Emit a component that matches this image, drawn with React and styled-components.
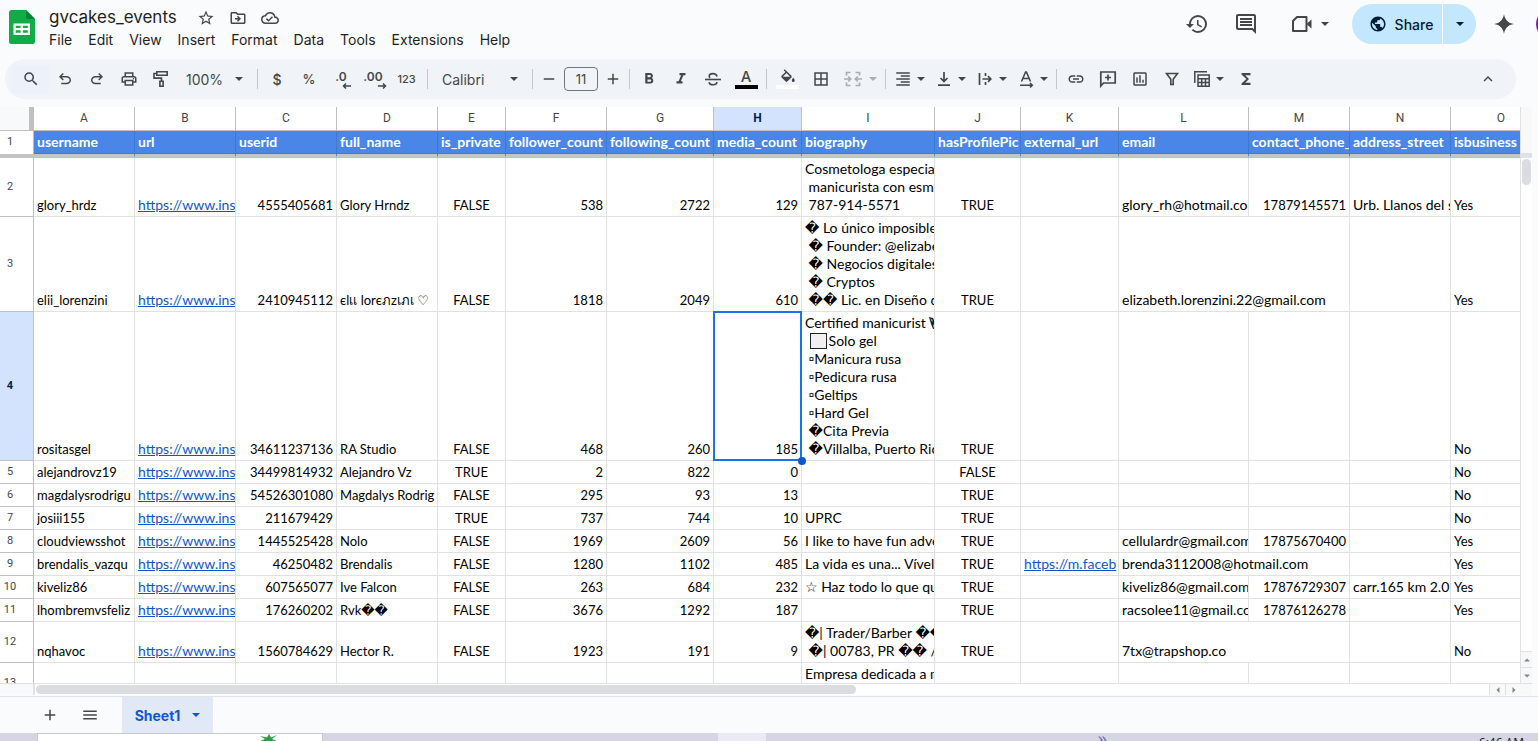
import React from "react";
import styled, { createGlobalStyle, css } from "styled-components";
import {
  MdStarBorder,
  MdOutlineDriveFileMove,
  MdOutlineCloudDone,
  MdHistory,
  MdOutlineComment,
  MdPublic,
  MdSearch,
  MdOutlinePrint,
  MdFormatBold,
  MdFormatItalic,
  MdBorderAll,
  MdFormatAlignRight,
  MdLink,
  MdOutlineInsertChart,
  MdFunctions,
  MdKeyboardArrowUp,
  MdMenu,
  MdAdd,
  MdRemove,
} from "react-icons/md";

const ui = `Inter, Roboto, "Liberation Sans", sans-serif`;
const cellFont = `Lato, "DejaVu Sans", "Noto Sans", sans-serif`;
const gray = "#444746";

const GlobalStyle = createGlobalStyle`
  *, *::before, *::after { box-sizing: border-box; }
  body { margin: 0; background: #f9fbfd; font-family: ${ui}; color: #1f1f1f; }
  button, input, select { font: inherit; color: inherit; }
`;

const Page = styled.div`
  display: flex;
  flex-direction: column;
  height: 100vh;
  overflow: hidden;
`;

/* ---------- title bar ---------- */

const Header = styled.header`
  display: flex;
  flex: none;
  height: 59px;
  padding-left: 9px;
  overflow: hidden;
`;

const Logo = styled.svg`
  flex: none;
  width: 26px;
  height: 34px;
  margin-top: 10px;
`;

const TitleBlock = styled.div`
  display: flex;
  flex-direction: column;
  margin-left: 6px;
  padding-top: 6px;
`;

const TitleLine = styled.div`
  display: flex;
  align-items: center;
  height: 24px;
  padding-left: 8px;
`;

const TitleInput = styled.input`
  width: 141px;
  padding: 0 0 2px;
  border: 0;
  background: none;
  font-size: 17px;
  line-height: 22px;
  outline: none;
`;

const PlainButton = styled.button`
  display: inline-flex;
  align-items: center;
  justify-content: center;
  flex: none;
  padding: 0;
  border: 0;
  background: none;
  color: ${gray};
`;

const TitleButton = styled(PlainButton)`
  width: 32px;
  height: 24px;
  font-size: 18px;
`;

const MenuBar = styled.nav`
  display: flex;
  height: 20px;
`;

const MenuButton = styled(PlainButton)`
  padding: 0 8px;
  font-size: 14px;
  line-height: 20px;
  color: #1f1f1f;
`;

const HeaderActions = styled.div`
  display: flex;
  align-items: center;
  height: 48px;
  margin-left: auto;
`;

const HeaderButton = styled(PlainButton)`
  width: ${(p) => p.$w || 49}px;
  height: 40px;
  padding-left: ${(p) => p.$pad || 0}px;
  gap: 8px;
  font-size: 24px;
`;

const SharePill = styled.div`
  display: flex;
  height: 40px;
  margin-left: 10px;
  border-radius: 20px;
  overflow: hidden;
  background: #c2e7ff;
`;

const ShareButton = styled(PlainButton)`
  width: 90px;
  padding-left: 8px;
  gap: 8px;
  font-size: 14px;
  font-weight: 500;
  color: #001d35;
  svg { font-size: 18px; }
`;

const ShareMenu = styled(PlainButton)`
  width: 34px;
  border-left: 1px solid #fff;
  color: #001d35;
`;

const Avatar = styled.span`
  flex: none;
  width: 32px;
  height: 32px;
  margin: 0 -30px 0 4px;
  border-radius: 50%;
  background: #7b1fa2;
`;

/* ---------- toolbar ---------- */

const Toolbar = styled.div`
  display: flex;
  align-items: center;
  flex: none;
  height: 40px;
  margin: 0 22px 8px 5px;
  padding: 0 12px 0 7px;
  border-radius: 20px;
  background: #f0f4f9;
`;

const Tool = styled(PlainButton)`
  width: ${(p) => p.$w || 32}px;
  height: 28px;
  font-size: 18px;
  opacity: ${(p) => (p.disabled ? 0.4 : 1)};
  ${(p) => p.$lit && css`background: #edf1fb;`}
`;

const TextTool = styled(Tool)`
  font-size: ${(p) => p.$size || 14}px;
  font-weight: 500;
`;

const SplitTool = styled(Tool)`
  width: ${(p) => p.$w || 41}px;
  padding-right: 5px;
  > :first-child { margin: 0 auto; }
`;

const Divider = styled.span`
  flex: none;
  width: 1px;
  height: 20px;
  margin: 0 3px;
  background: #c7c7c7;
`;

const SelectBox = styled.label`
  position: relative;
  flex: none;
  width: ${(p) => p.$w}px;
  color: ${gray};
  svg {
    position: absolute;
    top: 12px;
    right: 11px;
    pointer-events: none;
  }
`;

const Select = styled.select`
  width: 100%;
  height: 28px;
  padding: 0 0 0 ${(p) => p.$pad}px;
  border: 0;
  background: none;
  appearance: none;
  font-size: 14px;
  outline: none;
`;

const SizeInput = styled.input`
  width: 34px;
  height: 24px;
  margin: 0 2px;
  padding: 0;
  border: 1px solid #747775;
  border-radius: 4px;
  background: none;
  font-size: 13px;
  text-align: center;
  color: ${gray};
`;

const Stack = styled.span`
  display: flex;
  flex-direction: column;
  align-items: center;
  font-size: 15px;
  line-height: 16px;
  font-weight: 500;
  &::after {
    content: "";
    width: 23px;
    height: 4px;
    background: ${(p) => p.$ink};
  }
`;

const Spacer = styled.span`
  flex: 1;
`;

/* ---------- sheet ---------- */

const SheetArea = styled.main`
  display: flex;
  flex: 1;
  min-height: 0;
  margin-right: 6px;
  background: #fff;
`;

const SheetMain = styled.div`
  display: flex;
  flex-direction: column;
  flex: 1;
  min-width: 0;
`;

const GridView = styled.div`
  flex: 1;
  min-height: 0;
  overflow: hidden;
  border-right: 1px solid #e1e1e1;
  border-bottom: 1px solid #e1e1e1;
`;

const Grid = styled.table`
  width: ${(p) => p.$w}px;
  table-layout: fixed;
  border-collapse: separate;
  border-spacing: 0;
  font-family: ${cellFont};
  font-size: 13px;
  color: #000;
`;

const Col = styled.col`
  width: ${(p) => p.$w}px;
`;

const Corner = styled.td`
  height: 24px;
  padding: 0;
  border-right: 5px solid #c0c0c0;
  border-bottom: 1px solid #c0c0c0;
  background: #f8f9fa;
`;

const ColumnHead = styled.th`
  height: 24px;
  padding: 0 0 2px;
  border-right: 1px solid #c0c0c0;
  border-bottom: 1px solid #c0c0c0;
  font: ${(p) => (p.$on ? 700 : 400)} 12px Roboto, sans-serif;
  color: ${(p) => (p.$on ? "#041e49" : gray)};
  background: ${(p) => (p.$on ? "#d3e3fd" : "#fff")};
`;

const RowHead = styled.th`
  padding: 0 13px 2px 0;
  border-right: 1px solid #c0c0c0;
  border-bottom: 1px solid #c0c0c0;
  font: ${(p) => (p.$on ? 700 : 400)} 11px Roboto, sans-serif;
  color: ${(p) => (p.$on ? "#041e49" : gray)};
  background: ${(p) => (p.$on ? "#d3e3fd" : "#fff")};
  ${(p) => p.$frozen && css`border-bottom: 4px solid #c4c4c4;`}
`;

const FieldHead = styled.td`
  height: 27px;
  padding: 0 3px 1px;
  border-right: 1px solid #3f77cf;
  border-bottom: 4px solid #c4c4c4;
  box-shadow: inset 0 -1px #3f77cf;
  background: #4a86e8;
  font-size: 14px;
  font-weight: 700;
  color: #fff;
`;

const Row = styled.tr`
  height: ${(p) => p.$h}px;
`;

const Cell = styled.td`
  position: relative;
  padding: 2px 3px;
  border-right: 1px solid #e1e1e1;
  border-bottom: 1px solid #e1e1e1;
  font-size: ${(p) => (p.$wide ? 14 : 13)}px;
  vertical-align: ${(p) => (p.$top ? "top" : "bottom")};
  text-align: ${(p) => p.$align || "left"};
`;

const Line = styled.div`
  height: 18px;
  margin-right: ${(p) => (p.$flush ? -3 : 0)}px;
  overflow: hidden;
  line-height: 18px;
  white-space: pre;
`;

const CellLink = styled.a`
  color: #1155cc;
`;

const Selection = styled.span`
  position: absolute;
  inset: -1px;
  z-index: 1;
  border: 2px solid #1a73e8;
  pointer-events: none;
  &::after {
    content: "";
    position: absolute;
    right: -6px;
    bottom: -6px;
    width: 8px;
    height: 8px;
    border-radius: 50%;
    background: #0b57d0;
  }
`;

const BoxGlyph = styled.span`
  display: inline-block;
  width: 17px;
  height: 16px;
  margin: 1px 2px 0 1px;
  border: 1px solid #222;
  background: #f0f0f0;
  vertical-align: top;
`;

const EmojiDrawing = styled.svg`
  width: 14px;
  height: 14px;
  vertical-align: -2px;
`;

/* ---------- scroll bars ---------- */

const HScroll = styled.div`
  display: flex;
  height: 11px;
`;

const HCorner = styled.span`
  width: 35px;
  border-right: 2px solid #e1e1e1;
  background: #f8f9fa;
`;

const HTrack = styled.div`
  flex: 1;
  padding: 1px;
`;

const HThumb = styled.div`
  width: 56.5%;
  height: 9px;
  border-radius: 5px;
  background: #dadce0;
`;

const ScrollButton = styled(PlainButton)`
  width: ${(p) => (p.$v ? 11 : 16)}px;
  height: ${(p) => (p.$v ? 16 : 11)}px;
  background: #f8f8f8;
  ${(p) => (p.$v ? css`border-top: 1px solid #e1e1e1;` : css`border-left: 1px solid #e1e1e1;`)}
  color: #80868b;
`;

const VScroll = styled.div`
  display: flex;
  flex-direction: column;
  flex: none;
  width: 11px;
`;

const VHead = styled.span`
  height: 51px;
  border-bottom: 5px solid #dde1ea;
  background: #f8f8f8;
`;

const VTrack = styled.div`
  flex: 1;
  padding: 1px;
`;

const VThumb = styled.div`
  height: 26px;
  border-radius: 5px;
  background: #dadce0;
`;

const VFoot = styled.span`
  height: 12px;
  border-top: 1px solid #e1e1e1;
  background: #f8f8f8;
`;

/* ---------- tabs and task bar ---------- */

const TabBar = styled.footer`
  display: flex;
  align-items: center;
  flex: none;
  height: 37px;
  margin-top: 1px;
  padding-left: 30px;
  border-top: 1px solid #e1e3e6;
`;

const TabIcon = styled(PlainButton)`
  width: 40px;
  height: 36px;
  font-size: 18px;
`;

const SheetTab = styled(PlainButton)`
  width: 91px;
  height: 36px;
  margin-left: 12px;
  gap: 12px;
  background: #e1e9f7;
  font-size: 14px;
  font-weight: 700;
  color: #0b57d0;
`;

const TaskBar = styled.div`
  display: flex;
  flex: none;
  height: 8px;
  overflow: hidden;
  padding: 0 14px 0 37px;
  background: #d5d6e1;
`;

const TaskWindow = styled.div`
  width: 286px;
  padding-left: 220px;
  border: 1px solid #c9c9c9;
  border-bottom: 0;
  background: #fff;
  svg { display: block; width: 22px; height: 8px; }
`;

const TaskApp = styled.span`
  width: 48px;
  margin-left: 395px;
  background: #eaebf2;
`;

const TaskMore = styled.span`
  margin-left: auto;
  padding: 2px 372px 0 0;
  font: 16px/8px "Liberation Sans", sans-serif;
  color: #6b6bb0;
`;

const Clock = styled.span`
  padding-top: 3px;
  font: 12px/14px "Open Sans", sans-serif;
  color: #111;
`;

/* ---------- icons ---------- */

const Icon = ({ d, size = 18, box = 24, children, ...rest }) => (
  <svg width={size} height={size} viewBox={`0 0 ${box} ${box}`} fill="currentColor" aria-hidden="true" {...rest}>
    {d && <path d={d} />}
    {children}
  </svg>
);

const Caret = () => (
  <svg width="8" height="4" viewBox="0 0 8 4" fill="currentColor" aria-hidden="true">
    <path d="M0 0h8L4 4z" />
  </svg>
);

const undoPath =
  "M7 19v-2h7.1q1.575 0 2.738-1T18 13.5 16.838 11 14.1 10H7.8l2.6 2.6L9 14 4 9l5-5 1.4 1.4L7.8 8h6.3q2.425 0 4.163 1.575T20 13.5t-1.738 3.925T14.1 19H7Z";

const UndoIcon = () => <Icon d={undoPath} />;
const RedoIcon = () => (
  <Icon>
    <path d={undoPath} transform="matrix(-1 0 0 1 24 0)" />
  </Icon>
);

const Stroke = ({ children, w = 18, h = 18, sw = 1.6 }) => (
  <svg width={w} height={h} viewBox={`0 0 ${w} ${h}`} fill="none" stroke="currentColor" strokeWidth={sw} aria-hidden="true">
    {children}
  </svg>
);

const RollerIcon = () => (
  <Stroke>
    <path d="M4.800 1.800h10.400v3.400H4.800zM4.800 3.500H2v4.600h7.500v3M7.900 11.300h3.200v5H7.900z" />
  </Stroke>
);

const DecimalArrow = ({ right, children }) => (
  <DecimalBox>
    {children}
    <Stroke w={9} h={6} sw={1.5}>
      <path d={right ? "M0 3h7M5 .5 7.500 3 5 5.500" : "M9 3H2M4 .5 1.500 3 4 5.500"} />
    </Stroke>
  </DecimalBox>
);

const DecimalBox = styled.span`
  display: flex;
  flex-direction: column;
  align-items: flex-end;
  padding-top: 2px;
  font-size: 12px;
  font-weight: 600;
  line-height: 12px;
  svg { margin-right: -4px; }
`;

const BucketIcon = () => (
  <svg width="18" height="16" viewBox="0 0 24 21" fill="currentColor" aria-hidden="true">
    <path d="M16.560 8.940 7.620 0 6.210 1.410l2.380 2.380-5.150 5.150c-.59.59-.59 1.540 0 2.120l5.500 5.500c.29.29.68.44 1.060.44s.77-.15 1.060-.44l5.500-5.500c.59-.58.59-1.530 0-2.120zM5.210 10 10 5.210 14.790 10zM19 11.500s-2 2.170-2 3.500c0 1.100.9 2 2 2s2-.9 2-2c0-1.330-2-3.500-2-3.500z" />
  </svg>
);

const StrikeIcon = () => (
  <Stroke>
    <path d="M1 9.500h16" />
    <path d="M13 6.500C12.600 4.500 11 3.600 9 3.600S5.200 4.600 5.200 6.200c0 .7.3 1.300.9 1.700M5 12.200c.5 1.800 2 2.600 4 2.600s3.900-.9 3.900-2.700" />
  </Stroke>
);

const MergeIcon = () => (
  <Stroke sw={1.7}>
    <path d="M6.500 2.500h-4v3M11.500 2.500h4v3M6.500 15.500h-4v-3M11.500 15.500h4v-3M0 9h6M18 9h-6M4.200 6.500 6.700 9l-2.500 2.500M13.800 6.500 11.300 9l2.500 2.500" />
  </Stroke>
);

const AlignBottomIcon = () => (
  <Stroke sw={1.7}>
    <path d="M9 2v9.500M5.500 8 9 11.500 12.500 8M3 15.200h12" />
  </Stroke>
);

const WrapIcon = () => (
  <Stroke sw={1.7}>
    <path d="M3.500 3v12M9.500 3v3M9.500 12v3M6.500 9h8M12 6.200 14.800 9 12 11.800" />
  </Stroke>
);

const RotateIcon = () => (
  <Stroke sw={1.6}>
    <path d="M4.500 11.500 8.600 2h.8l4.100 9.500M6 8.500h6M3 15.200h12M13 13l2.300 2.200L13 17.400" />
  </Stroke>
);

const AddCommentIcon = () => (
  <Stroke sw={1.7}>
    <path d="M1.800 16V2h14.400v11H4.500zM9 4.500v6M6 7.500h6" />
  </Stroke>
);

const FilterIcon = () => (
  <Stroke sw={1.6}>
    <path d="M3.500 3.500h11L10.200 9.200v5.300H7.800V9.200z" />
  </Stroke>
);

const TableViewIcon = () => (
  <Stroke sw={1.5}>
    <path d="M1.800 13V1.800H14M5 5h11.200v11.200H5zM5 8.700h11.200M5 12.400h11.200M8.700 8.700v7.500M12.500 8.700v7.500" />
  </Stroke>
);

const CameraIcon = () => (
  <svg width="22" height="18" viewBox="0 0 22 18" aria-hidden="true">
    <path d="M6 2h9.500v14H2V6z" fill="none" stroke={gray} strokeWidth="2" strokeLinejoin="round" />
    <path d="M16 8.500 20.500 4.500v9L16 9.500z" fill={gray} />
  </svg>
);

const SparkIcon = () => (
  <svg width="20" height="20" viewBox="0 0 20 20" fill={gray} aria-hidden="true">
    <path d="M10 0c.8 5.600 4 9.200 10 10-6 .8-9.200 4.400-10 10-.8-5.600-4-9.200-10-10C6 9.200 9.200 5.600 10 0z" />
  </svg>
);

const SheetsLogo = () => (
  <Logo viewBox="0 0 26 34" role="img" aria-label="Sheets">
    <path d="M2.500 0H17l9 9v22.500a2.500 2.500 0 0 1-2.500 2.500h-21A2.500 2.500 0 0 1 0 31.500v-29A2.500 2.500 0 0 1 2.500 0z" fill="#0fac48" />
    <path d="M17 0l9 9h-6.500A2.500 2.500 0 0 1 17 6.500z" fill="#078335" />
    <path d="M4.500 13.500h16.500V25H4.500zM6.700 15.700v2.400h4.900v-2.400zM13.900 15.700v2.400h4.900v-2.400zM6.700 20.300v2.500h4.900v-2.500zM13.900 20.300v2.500h4.900v-2.500z" fill="#fff" fillRule="evenodd" />
  </Logo>
);

const Nail = () => (
  <EmojiDrawing viewBox="0 0 14 14" aria-hidden="true">
    <path d="M0 1l4 1 2 4 5 1v6H4L2 8z" fill="#222" />
    <path d="M1.500 2.500l2 1 .5 2-2-.5z" fill="#2bb3c0" />
    <path d="M4 9l4-1v4l-3 1z" fill="#e8a0b8" />
  </EmojiDrawing>
);

/* ---------- data ---------- */

const columns = [
  ["A", 101, "username"],
  ["B", 101, "url"],
  ["C", 101, "userid", "right"],
  ["D", 101, "full_name"],
  ["E", 68, "is_private", "center"],
  ["F", 101, "follower_count", "right"],
  ["G", 107, "following_count", "right"],
  ["H", 88, "media_count", "right"],
  ["I", 133, "biography"],
  ["J", 86, "hasProfilePic", "center"],
  ["K", 98, "external_url"],
  ["L", 130, "email"],
  ["M", 101, "contact_phone_", "right"],
  ["N", 101, "address_street"],
  ["O", 101, "isbusiness"],
];
const wideText = ["B", "I", "K", "L", "N"];
const rowHeadWidth = 34;
const gridWidth = columns.reduce((sum, c) => sum + c[1], rowHeadWidth);

const profile = "https://www.ins";
const bio4 = [
  <>Certified manicurist <Nail /></>,
  <> <BoxGlyph />Solo gel</>,
  " ▫Manicura rusa",
  " ▫Pedicura rusa",
  " ▫Geltips",
  " ▫Hard Gel",
  " \uFFFDCita Previa",
  " \uFFFDVillalba, Puerto Ric",
];

const rows = [
  { n: 2, h: 59, v: ["glory_hrdz", profile, "4555405681", "Glory Hrndz", "FALSE", "538", "2722", "129", ["Cosmetologa especial", " manicurista con esma", " 787-914-5571"], "TRUE", "", "glory_rh@hotmail.co", "17879145571", "Urb. Llanos del s", "Yes"] },
  { n: 3, h: 95, wide: true, v: ["elii_lorenzini", profile, "2410945112", "єlเเ lorєภzเภเ ♡", "FALSE", "1818", "2049", "610", ["\uFFFD Lo único imposible", " \uFFFD Founder: @elizabe", " \uFFFD Negocios digitales", " \uFFFD Cryptos", " \uFFFD\uFFFD Lic. en Diseño d"], "TRUE", "", "elizabeth.lorenzini.22@gmail.com", "", "", "Yes"] },
  { n: 4, h: 149, v: ["rositasgel", profile, "34611237136", "RA Studio", "FALSE", "468", "260", "185", bio4, "TRUE", "", "", "", "", "No"] },
  { n: 5, h: 23, v: ["alejandrovz19", profile, "34499814932", "Alejandro Vz", "TRUE", "2", "822", "0", "", "FALSE", "", "", "", "", "No"] },
  { n: 6, h: 23, v: ["magdalysrodrigu", profile, "54526301080", "Magdalys Rodrig", "FALSE", "295", "93", "13", "", "TRUE", "", "", "", "", "No"] },
  { n: 7, h: 23, v: ["josiii155", profile, "211679429", "", "TRUE", "737", "744", "10", "UPRC", "TRUE", "", "", "", "", "No"] },
  { n: 8, h: 23, v: ["cloudviewsshot", profile, "1445525428", "Nolo", "FALSE", "1969", "2609", "56", "I like to have fun adve", "TRUE", "", "cellulardr@gmail.com", "17875670400", "", "Yes"] },
  { n: 9, h: 23, wide: true, v: ["brendalis_vazqu", profile, "46250482", "Brendalis", "FALSE", "1280", "1102", "485", "La vida es una... Vívela", "TRUE", "https://m.faceb", "brenda3112008@hotmail.com", "", "", "Yes"] },
  { n: 10, h: 23, v: ["kiveliz86", profile, "607565077", "Ive Falcon", "FALSE", "263", "684", "232", "☆ Haz todo lo que qui", "TRUE", "", "kiveliz86@gmail.com", "17876729307", "carr.165 km 2.0 I", "Yes"] },
  { n: 11, h: 23, v: ["lhombremvsfeliz", profile, "176260202", "Rvk\uFFFD\uFFFD", "FALSE", "3676", "1292", "187", "", "TRUE", "", "racsolee11@gmail.co", "17876126278", "", "Yes"] },
  { n: 12, h: 41, wide: true, v: ["nqhavoc", profile, "1560784629", "Hector R.", "FALSE", "1923", "191", "9", ["\uFFFD| Trader/Barber \uFFFD\uFFFD", " \uFFFD| 00783, PR \uFFFD\uFFFD /"], "TRUE", "", "7tx@trapshop.co", "", "", "No"] },
  { n: 13, h: 41, top: true, v: ["", "", "", "", "", "", "", "", "Empresa dedicada a m", "", "", "", "", "", ""] },
];

const CellContent = ({ value, flush }) => {
  const lines = Array.isArray(value) ? value : [value];
  return lines.map((line, i) => (
    <Line key={i} $flush={flush}>
      {typeof line === "string" && line.startsWith("https://") ? <CellLink href={line}>{line}</CellLink> : line}
    </Line>
  ));
};

const DataRow = ({ row }) => (
  <Row $h={row.h}>
    <RowHead scope="row" $on={row.n === 4}>{row.n}</RowHead>
    {columns.map(([letter, , , align], i) => {
      if (row.wide && letter === "M") return null;
      return (
        <Cell
          key={letter}
          colSpan={row.wide && letter === "L" ? 2 : 1}
          $align={align}
          $top={row.top}
          $wide={wideText.includes(letter)}
        >
          {row.v[i] && <CellContent value={row.v[i]} flush={!align} />}
          {row.n === 4 && letter === "H" && <Selection />}
        </Cell>
      );
    })}
  </Row>
);

export default function App() {
  return (
    <Page>
      <GlobalStyle />
      <Header>
        <SheetsLogo />
        <TitleBlock>
          <TitleLine>
            <TitleInput aria-label="Rename" defaultValue="gvcakes_events" />
            <TitleButton aria-label="Star"><MdStarBorder /></TitleButton>
            <TitleButton aria-label="Move"><MdOutlineDriveFileMove /></TitleButton>
            <TitleButton aria-label="Document status"><MdOutlineCloudDone /></TitleButton>
          </TitleLine>
          <MenuBar>
            {["File", "Edit", "View", "Insert", "Format", "Data", "Tools", "Extensions", "Help"].map((m) => (
              <MenuButton key={m}>{m}</MenuButton>
            ))}
          </MenuBar>
        </TitleBlock>
        <HeaderActions>
          <HeaderButton aria-label="Version history"><MdHistory /></HeaderButton>
          <HeaderButton aria-label="Comments"><MdOutlineComment /></HeaderButton>
          <HeaderButton $w={72} $pad={8} aria-label="Meet"><CameraIcon /><Caret /></HeaderButton>
          <SharePill>
            <ShareButton><MdPublic />Share</ShareButton>
            <ShareMenu aria-label="Share options"><Caret /></ShareMenu>
          </SharePill>
          <HeaderButton $w={56} aria-label="Ask Gemini"><SparkIcon /></HeaderButton>
          <Avatar />
        </HeaderActions>
      </Header>

      <Toolbar role="toolbar">
        <Tool $w={37} $lit aria-label="Search the menus"><MdSearch /></Tool>
        <Tool aria-label="Undo"><UndoIcon /></Tool>
        <Tool aria-label="Redo"><RedoIcon /></Tool>
        <Tool aria-label="Print"><MdOutlinePrint /></Tool>
        <Tool aria-label="Paint format"><RollerIcon /></Tool>
        <SelectBox $w={77}>
          <Select $pad={9} aria-label="Zoom"><option>100%</option></Select>
          <Caret />
        </SelectBox>
        <Divider />
        <TextTool aria-label="Currency">$</TextTool>
        <TextTool aria-label="Percent" $size={13}>%</TextTool>
        <Tool aria-label="Decrease decimal places"><DecimalArrow>.0</DecimalArrow></Tool>
        <Tool aria-label="Increase decimal places"><DecimalArrow right>.00</DecimalArrow></Tool>
        <TextTool $w={35} $size={11} aria-label="More formats">123</TextTool>
        <Divider />
        <SelectBox $w={98}>
          <Select $pad={11} aria-label="Font"><option>Calibri</option></Select>
          <Caret />
        </SelectBox>
        <Divider />
        <Tool $w={26} aria-label="Decrease font size"><MdRemove /></Tool>
        <SizeInput aria-label="Font size" defaultValue="11" />
        <Tool $w={26} aria-label="Increase font size"><MdAdd /></Tool>
        <Divider />
        <Tool aria-label="Bold"><MdFormatBold /></Tool>
        <Tool aria-label="Italic"><MdFormatItalic /></Tool>
        <Tool aria-label="Strikethrough"><StrikeIcon /></Tool>
        <Tool $w={34} aria-label="Text color"><Stack $ink="#000">A</Stack></Tool>
        <Divider />
        <Tool $w={35} aria-label="Fill color"><Stack $ink="#fff"><BucketIcon /></Stack></Tool>
        <Tool aria-label="Borders"><MdBorderAll /></Tool>
        <SplitTool $w={45} disabled aria-label="Merge cells"><MergeIcon /><Caret /></SplitTool>
        <Divider />
        <SplitTool aria-label="Horizontal align"><MdFormatAlignRight /><Caret /></SplitTool>
        <SplitTool aria-label="Vertical align"><AlignBottomIcon /><Caret /></SplitTool>
        <SplitTool aria-label="Text wrapping"><WrapIcon /><Caret /></SplitTool>
        <SplitTool aria-label="Text rotation"><RotateIcon /><Caret /></SplitTool>
        <Divider />
        <Tool aria-label="Insert link"><MdLink /></Tool>
        <Tool aria-label="Insert comment"><AddCommentIcon /></Tool>
        <Tool aria-label="Insert chart"><MdOutlineInsertChart /></Tool>
        <Tool aria-label="Create a filter"><FilterIcon /></Tool>
        <SplitTool aria-label="Table views"><TableViewIcon /><Caret /></SplitTool>
        <Tool $w={33} aria-label="Functions"><MdFunctions /></Tool>
        <Spacer />
        <Tool aria-label="Hide the menus"><MdKeyboardArrowUp /></Tool>
      </Toolbar>

      <SheetArea>
        <SheetMain>
          <GridView>
            <Grid $w={gridWidth}>
              <colgroup>
                <Col $w={rowHeadWidth} />
                {columns.map(([letter, w]) => <Col key={letter} $w={w} />)}
              </colgroup>
              <thead>
                <tr>
                  <Corner />
                  {columns.map(([letter]) => (
                    <ColumnHead key={letter} scope="col" $on={letter === "H"}>{letter}</ColumnHead>
                  ))}
                </tr>
                <tr>
                  <RowHead scope="row" $frozen>1</RowHead>
                  {columns.map(([letter, , name]) => (
                    <FieldHead key={letter}><Line $flush>{name}</Line></FieldHead>
                  ))}
                </tr>
              </thead>
              <tbody>
                {rows.map((row) => <DataRow key={row.n} row={row} />)}
              </tbody>
            </Grid>
          </GridView>
          <HScroll>
            <HCorner />
            <HTrack><HThumb /></HTrack>
            <ScrollButton aria-label="Scroll left"><Icon size={6} box={6} d="M4.500 0v6L1.500 3z" /></ScrollButton>
            <ScrollButton aria-label="Scroll right"><Icon size={6} box={6} d="M1.500 0v6l3-3z" /></ScrollButton>
          </HScroll>
        </SheetMain>
        <VScroll>
          <VHead />
          <VTrack><VThumb /></VTrack>
          <ScrollButton $v aria-label="Scroll up"><Icon size={6} box={6} d="M0 4.500h6L3 1.500z" /></ScrollButton>
          <ScrollButton $v aria-label="Scroll down"><Icon size={6} box={6} d="M0 1.500h6l-3 3z" /></ScrollButton>
          <VFoot />
        </VScroll>
      </SheetArea>

      <TabBar>
        <TabIcon aria-label="Add sheet"><MdAdd /></TabIcon>
        <TabIcon aria-label="All sheets"><MdMenu /></TabIcon>
        <SheetTab>Sheet1<Caret /></SheetTab>
      </TabBar>

      <TaskBar>
        <TaskWindow>
          <svg viewBox="0 0 22 8" aria-hidden="true">
            <path d="M0 8 7 5 2 2l7 1.500L11 0l2 3.500L19 1l-5 4 7 3z" fill="#2f9a45" />
          </svg>
        </TaskWindow>
        <TaskApp />
        <TaskMore>»</TaskMore>
        <Clock>6:46 AM</Clock>
      </TaskBar>
    </Page>
  );
}
